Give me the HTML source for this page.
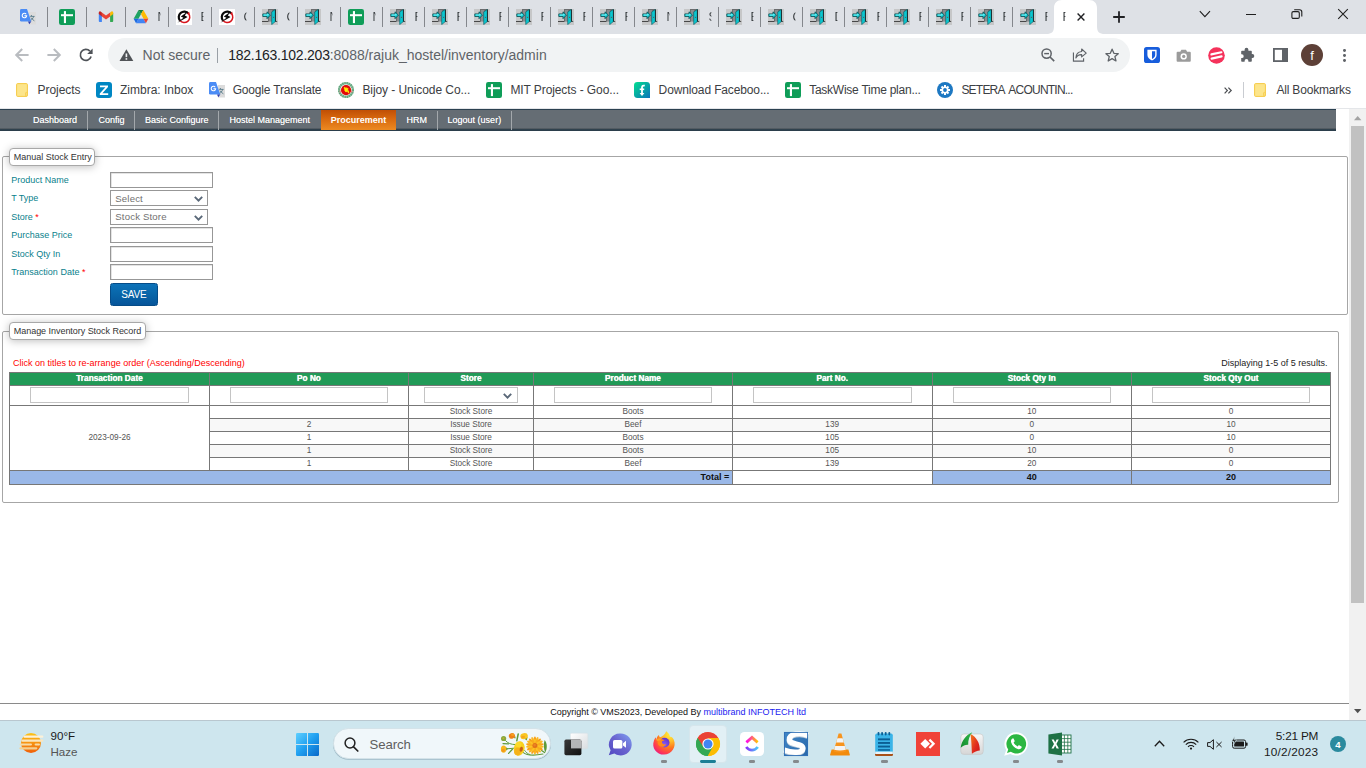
<!DOCTYPE html>
<html><head><meta charset="utf-8"><title>Inventory</title>
<style>
*{box-sizing:border-box;margin:0;padding:0}
html,body{width:1366px;height:768px;overflow:hidden;background:#fff;font-family:"Liberation Sans",sans-serif;}
.a{position:absolute}
.t{position:absolute;white-space:nowrap;display:block}
svg{position:absolute;overflow:visible}
#tabstrip{position:absolute;left:0;top:0;width:1366px;height:34px;background:#dee1e6;overflow:hidden}
#toolbar{position:absolute;left:0;top:34px;width:1366px;height:75px;background:#fff}
#page{position:absolute;left:0;top:109px;width:1349px;height:611px;background:#fff;overflow:hidden}
#sb{position:absolute;left:1349px;top:109px;width:17px;height:611px;background:#f1f1f1}
#taskbar{position:absolute;left:0;top:720px;width:1366px;height:48px;background:#cee6ee;overflow:hidden}
</style></head><body>
<svg width="0" height="0" style="position:absolute"><defs>
<symbol id="door" viewBox="0 0 16 16">
<rect x="0" y="0" width="16" height="16" fill="#c6c7c8"/>
<rect x="6" y="0" width="8" height="12.4" fill="#6a6c6e"/>
<rect x="7" y="1" width="3.2" height="11" fill="#8a8c8e"/>
<rect x="0" y="12" width="6.4" height="0.9" fill="#3a3a3a"/>
<polygon points="13.4,11.4 15.6,12.6 13.4,12.9" fill="#222"/>
<polygon points="9.7,2.9 13.3,0.5 13.3,12.6 9.7,15.6" fill="#0cc6cf" stroke="#075a60" stroke-width="0.6"/>
<polygon points="13.3,0.5 14,0.9 14,12.3 13.3,12.6" fill="#1a1a1a"/>
<circle cx="11.6" cy="8.2" r="0.55" fill="#7a3030"/>
<polygon points="0.8,4.9 5,4.9 5,2.8 8.4,6.1 5,9.7 5,7.5 0.8,7.5" fill="#10d0d8" stroke="#06474c" stroke-width="0.8"/>
<polygon points="1.6,5.5 5.4,5.5 5.4,4.6 7,6.1 5.4,6.6 1.6,6.6" fill="#7ff3f6"/>
</symbol>
<symbol id="gplus" viewBox="0 0 16 16">
<rect x="0" y="0" width="16" height="16" rx="2.2" fill="#0f9d58"/>
<rect x="4.9" y="2.1" width="2.1" height="12" fill="#fff"/>
<rect x="2" y="5.2" width="12" height="2" fill="#fff"/>
</symbol>
<symbol id="gtr" viewBox="0 0 16 16">
<rect x="9" y="3" width="7" height="12.5" fill="#dcdcdc"/>
<path d="M11.4 6V7M10.2 7.4H14.6M13.6 7.4C13.2 9.4 11.8 10.8 10.2 11.6M11 8.6C11.8 10 13 11 14.4 11.8" fill="none" stroke="#547888" stroke-width="0.9"/>
<path d="M0 1.4Q0 0 1.4 0H7L11.3 12.6H1.4Q0 12.6 0 11.2Z" fill="#4b8cf5"/>
<polygon points="8,12.6 11.3,12.6 9.3,15.2" fill="#3040b0"/>
<path d="M6.2 5.2A2.2 2.2 0 1 0 6.6 6.8H4.4" fill="none" stroke="#fff" stroke-width="1.1"/>
</symbol>
<symbol id="gmail" viewBox="0 0 16 16">
<path d="M0.8 4V12Q0.8 12.9 1.7 12.9H3.9V6.4Z" fill="#4285f4"/>
<path d="M15.2 4V12Q15.2 12.9 14.3 12.9H12.1V6.4Z" fill="#34a853"/>
<path d="M12.1 3.4L13.4 2.5A1.15 1.15 0 0 1 15.2 3.5V5L12.1 7.6Z" fill="#fbbc04"/>
<path d="M3.9 3.4L8 6.6L12.1 3.4V7.6L8 10.6L3.9 7.6Z" fill="#ea4335"/>
<path d="M0.8 3.5A1.15 1.15 0 0 1 2.6 2.5L3.9 3.4V7.6L0.8 5Z" fill="#c5221f"/>
</symbol>
<symbol id="gdrive" viewBox="0 0 16 16">
<polygon points="0.6,9.8 5.6,0.9 8,5.1 5.5,9.8" fill="#1ea362"/>
<polygon points="5.6,0.9 10.4,0.9 8,5.1" fill="#188038"/>
<polygon points="10.4,0.9 15.3,9.8 10.5,9.8 8,5.1" fill="#ffba00"/>
<polygon points="5.5,9.8 10.5,9.8 12.9,14.3 3.1,14.3" fill="#4285f4"/>
<polygon points="0.6,9.8 5.5,9.8 3.1,14.3" fill="#1a6ae0"/>
<polygon points="10.5,9.8 15.3,9.8 12.9,14.3" fill="#ea4335"/>
</symbol>
<symbol id="nofl" viewBox="0 0 16 16">
<rect x="0" y="0" width="16" height="16" fill="#fff"/>
<path d="M12.5 4.6A5.5 5.5 0 0 0 4 11.6" fill="none" stroke="#0a0a0a" stroke-width="2.2"/>
<path d="M12.5 4.6A5.5 5.5 0 0 1 4 11.6" fill="none" stroke="#d8141c" stroke-width="1.5"/>
<polygon points="13.2,2.6 13.6,5.6 11,5" fill="#d8141c"/>
<polygon points="12,2.2 4.8,7.4 7.4,8.8 1.4,13.8 11.6,8 8.8,6.6" fill="#0a0a0a"/>
</symbol>
</defs></svg>

<div id="tabstrip">
<div class="a" style="left:47.0px;top:7px;width:1px;height:20px;background:#84878c;"></div>
<div class="a" style="left:86.0px;top:7px;width:1px;height:20px;background:#84878c;"></div>
<div class="a" style="left:125.0px;top:7px;width:1px;height:20px;background:#84878c;"></div>
<div class="a" style="left:168.0px;top:7px;width:1px;height:20px;background:#84878c;"></div>
<div class="a" style="left:211.0px;top:7px;width:1px;height:20px;background:#84878c;"></div>
<div class="a" style="left:254.0px;top:7px;width:1px;height:20px;background:#84878c;"></div>
<div class="a" style="left:297.0px;top:7px;width:1px;height:20px;background:#84878c;"></div>
<div class="a" style="left:340.0px;top:7px;width:1px;height:20px;background:#84878c;"></div>
<div class="a" style="left:382.0px;top:7px;width:1px;height:20px;background:#84878c;"></div>
<div class="a" style="left:424.0px;top:7px;width:1px;height:20px;background:#84878c;"></div>
<div class="a" style="left:466.0px;top:7px;width:1px;height:20px;background:#84878c;"></div>
<div class="a" style="left:508.0px;top:7px;width:1px;height:20px;background:#84878c;"></div>
<div class="a" style="left:550.0px;top:7px;width:1px;height:20px;background:#84878c;"></div>
<div class="a" style="left:592.0px;top:7px;width:1px;height:20px;background:#84878c;"></div>
<div class="a" style="left:634.0px;top:7px;width:1px;height:20px;background:#84878c;"></div>
<div class="a" style="left:676.0px;top:7px;width:1px;height:20px;background:#84878c;"></div>
<div class="a" style="left:718.0px;top:7px;width:1px;height:20px;background:#84878c;"></div>
<div class="a" style="left:760.0px;top:7px;width:1px;height:20px;background:#84878c;"></div>
<div class="a" style="left:802.0px;top:7px;width:1px;height:20px;background:#84878c;"></div>
<div class="a" style="left:844.0px;top:7px;width:1px;height:20px;background:#84878c;"></div>
<div class="a" style="left:886.0px;top:7px;width:1px;height:20px;background:#84878c;"></div>
<div class="a" style="left:928.0px;top:7px;width:1px;height:20px;background:#84878c;"></div>
<div class="a" style="left:970.0px;top:7px;width:1px;height:20px;background:#84878c;"></div>
<div class="a" style="left:1012.0px;top:7px;width:1px;height:20px;background:#84878c;"></div>
<svg style="left:20px;top:9px" width="16" height="16"><use href="#gtr"/></svg>
<svg style="left:59px;top:9px" width="16" height="16"><use href="#gplus"/></svg>
<svg style="left:98px;top:9px" width="16" height="16"><use href="#gmail"/></svg>
<svg style="left:133px;top:9px" width="16" height="16"><use href="#gdrive"/></svg>
<div class="a" style="left:157.5px;top:8px;width:3.3px;height:18px;overflow:hidden;-webkit-mask-image:linear-gradient(90deg,#000 55%,transparent 100%);mask-image:linear-gradient(90deg,#000 55%,transparent 100%)"><span class="t" style="left:0;top:2.64px;font-size:12px;line-height:12px;color:#3c4043">N</span></div>
<svg style="left:176px;top:9px" width="16" height="16"><use href="#nofl"/></svg>
<div class="a" style="left:200.5px;top:8px;width:3.3px;height:18px;overflow:hidden;-webkit-mask-image:linear-gradient(90deg,#000 55%,transparent 100%);mask-image:linear-gradient(90deg,#000 55%,transparent 100%)"><span class="t" style="left:0;top:2.64px;font-size:12px;line-height:12px;color:#3c4043">E</span></div>
<svg style="left:219px;top:9px" width="16" height="16"><use href="#nofl"/></svg>
<div class="a" style="left:243.5px;top:8px;width:3.3px;height:18px;overflow:hidden;-webkit-mask-image:linear-gradient(90deg,#000 55%,transparent 100%);mask-image:linear-gradient(90deg,#000 55%,transparent 100%)"><span class="t" style="left:0;top:2.64px;font-size:12px;line-height:12px;color:#3c4043">C</span></div>
<svg style="left:262px;top:9px" width="16" height="16"><use href="#door"/></svg>
<div class="a" style="left:286.5px;top:8px;width:3.3px;height:18px;overflow:hidden;-webkit-mask-image:linear-gradient(90deg,#000 55%,transparent 100%);mask-image:linear-gradient(90deg,#000 55%,transparent 100%)"><span class="t" style="left:0;top:2.64px;font-size:12px;line-height:12px;color:#3c4043">C</span></div>
<svg style="left:305px;top:9px" width="16" height="16"><use href="#door"/></svg>
<div class="a" style="left:329.5px;top:8px;width:3.3px;height:18px;overflow:hidden;-webkit-mask-image:linear-gradient(90deg,#000 55%,transparent 100%);mask-image:linear-gradient(90deg,#000 55%,transparent 100%)"><span class="t" style="left:0;top:2.64px;font-size:12px;line-height:12px;color:#3c4043">N</span></div>
<svg style="left:348px;top:9px" width="16" height="16"><use href="#gplus"/></svg>
<div class="a" style="left:372.5px;top:8px;width:3.3px;height:18px;overflow:hidden;-webkit-mask-image:linear-gradient(90deg,#000 55%,transparent 100%);mask-image:linear-gradient(90deg,#000 55%,transparent 100%)"><span class="t" style="left:0;top:2.64px;font-size:12px;line-height:12px;color:#3c4043">N</span></div>
<svg style="left:390px;top:9px" width="16" height="16"><use href="#door"/></svg>
<div class="a" style="left:414.5px;top:8px;width:3.3px;height:18px;overflow:hidden;-webkit-mask-image:linear-gradient(90deg,#000 55%,transparent 100%);mask-image:linear-gradient(90deg,#000 55%,transparent 100%)"><span class="t" style="left:0;top:2.64px;font-size:12px;line-height:12px;color:#3c4043">F</span></div>
<svg style="left:432px;top:9px" width="16" height="16"><use href="#door"/></svg>
<div class="a" style="left:456.5px;top:8px;width:3.3px;height:18px;overflow:hidden;-webkit-mask-image:linear-gradient(90deg,#000 55%,transparent 100%);mask-image:linear-gradient(90deg,#000 55%,transparent 100%)"><span class="t" style="left:0;top:2.64px;font-size:12px;line-height:12px;color:#3c4043">F</span></div>
<svg style="left:474px;top:9px" width="16" height="16"><use href="#door"/></svg>
<div class="a" style="left:498.5px;top:8px;width:3.3px;height:18px;overflow:hidden;-webkit-mask-image:linear-gradient(90deg,#000 55%,transparent 100%);mask-image:linear-gradient(90deg,#000 55%,transparent 100%)"><span class="t" style="left:0;top:2.64px;font-size:12px;line-height:12px;color:#3c4043">F</span></div>
<svg style="left:516px;top:9px" width="16" height="16"><use href="#door"/></svg>
<div class="a" style="left:540.5px;top:8px;width:3.3px;height:18px;overflow:hidden;-webkit-mask-image:linear-gradient(90deg,#000 55%,transparent 100%);mask-image:linear-gradient(90deg,#000 55%,transparent 100%)"><span class="t" style="left:0;top:2.64px;font-size:12px;line-height:12px;color:#3c4043">F</span></div>
<svg style="left:558px;top:9px" width="16" height="16"><use href="#door"/></svg>
<div class="a" style="left:582.5px;top:8px;width:3.3px;height:18px;overflow:hidden;-webkit-mask-image:linear-gradient(90deg,#000 55%,transparent 100%);mask-image:linear-gradient(90deg,#000 55%,transparent 100%)"><span class="t" style="left:0;top:2.64px;font-size:12px;line-height:12px;color:#3c4043">F</span></div>
<svg style="left:600px;top:9px" width="16" height="16"><use href="#door"/></svg>
<div class="a" style="left:624.5px;top:8px;width:3.3px;height:18px;overflow:hidden;-webkit-mask-image:linear-gradient(90deg,#000 55%,transparent 100%);mask-image:linear-gradient(90deg,#000 55%,transparent 100%)"><span class="t" style="left:0;top:2.64px;font-size:12px;line-height:12px;color:#3c4043">F</span></div>
<svg style="left:642px;top:9px" width="16" height="16"><use href="#door"/></svg>
<div class="a" style="left:666.5px;top:8px;width:3.3px;height:18px;overflow:hidden;-webkit-mask-image:linear-gradient(90deg,#000 55%,transparent 100%);mask-image:linear-gradient(90deg,#000 55%,transparent 100%)"><span class="t" style="left:0;top:2.64px;font-size:12px;line-height:12px;color:#3c4043">N</span></div>
<svg style="left:684px;top:9px" width="16" height="16"><use href="#door"/></svg>
<div class="a" style="left:708.5px;top:8px;width:3.3px;height:18px;overflow:hidden;-webkit-mask-image:linear-gradient(90deg,#000 55%,transparent 100%);mask-image:linear-gradient(90deg,#000 55%,transparent 100%)"><span class="t" style="left:0;top:2.64px;font-size:12px;line-height:12px;color:#3c4043">S</span></div>
<svg style="left:726px;top:9px" width="16" height="16"><use href="#door"/></svg>
<div class="a" style="left:750.5px;top:8px;width:3.3px;height:18px;overflow:hidden;-webkit-mask-image:linear-gradient(90deg,#000 55%,transparent 100%);mask-image:linear-gradient(90deg,#000 55%,transparent 100%)"><span class="t" style="left:0;top:2.64px;font-size:12px;line-height:12px;color:#3c4043">E</span></div>
<svg style="left:768px;top:9px" width="16" height="16"><use href="#door"/></svg>
<div class="a" style="left:792.5px;top:8px;width:3.3px;height:18px;overflow:hidden;-webkit-mask-image:linear-gradient(90deg,#000 55%,transparent 100%);mask-image:linear-gradient(90deg,#000 55%,transparent 100%)"><span class="t" style="left:0;top:2.64px;font-size:12px;line-height:12px;color:#3c4043">C</span></div>
<svg style="left:810px;top:9px" width="16" height="16"><use href="#door"/></svg>
<div class="a" style="left:834.5px;top:8px;width:3.3px;height:18px;overflow:hidden;-webkit-mask-image:linear-gradient(90deg,#000 55%,transparent 100%);mask-image:linear-gradient(90deg,#000 55%,transparent 100%)"><span class="t" style="left:0;top:2.64px;font-size:12px;line-height:12px;color:#3c4043">D</span></div>
<svg style="left:852px;top:9px" width="16" height="16"><use href="#door"/></svg>
<div class="a" style="left:876.5px;top:8px;width:3.3px;height:18px;overflow:hidden;-webkit-mask-image:linear-gradient(90deg,#000 55%,transparent 100%);mask-image:linear-gradient(90deg,#000 55%,transparent 100%)"><span class="t" style="left:0;top:2.64px;font-size:12px;line-height:12px;color:#3c4043">F</span></div>
<svg style="left:894px;top:9px" width="16" height="16"><use href="#door"/></svg>
<div class="a" style="left:918.5px;top:8px;width:3.3px;height:18px;overflow:hidden;-webkit-mask-image:linear-gradient(90deg,#000 55%,transparent 100%);mask-image:linear-gradient(90deg,#000 55%,transparent 100%)"><span class="t" style="left:0;top:2.64px;font-size:12px;line-height:12px;color:#3c4043">F</span></div>
<svg style="left:936px;top:9px" width="16" height="16"><use href="#door"/></svg>
<div class="a" style="left:960.5px;top:8px;width:3.3px;height:18px;overflow:hidden;-webkit-mask-image:linear-gradient(90deg,#000 55%,transparent 100%);mask-image:linear-gradient(90deg,#000 55%,transparent 100%)"><span class="t" style="left:0;top:2.64px;font-size:12px;line-height:12px;color:#3c4043">F</span></div>
<svg style="left:978px;top:9px" width="16" height="16"><use href="#door"/></svg>
<div class="a" style="left:1002.5px;top:8px;width:3.3px;height:18px;overflow:hidden;-webkit-mask-image:linear-gradient(90deg,#000 55%,transparent 100%);mask-image:linear-gradient(90deg,#000 55%,transparent 100%)"><span class="t" style="left:0;top:2.64px;font-size:12px;line-height:12px;color:#3c4043">F</span></div>
<svg style="left:1020px;top:9px" width="16" height="16"><use href="#door"/></svg>
<div class="a" style="left:1044.5px;top:8px;width:3.3px;height:18px;overflow:hidden;-webkit-mask-image:linear-gradient(90deg,#000 55%,transparent 100%);mask-image:linear-gradient(90deg,#000 55%,transparent 100%)"><span class="t" style="left:0;top:2.64px;font-size:12px;line-height:12px;color:#3c4043">F</span></div>
<svg style="left:1046px;top:0" width="60" height="34" viewBox="0 0 60 34"><path d="M0 34C6 34 8 32 8 26V8C8 3 11 0 16 0H43C48 0 51 3 51 8V26C51 32 53 34 59 34Z" fill="#fff"/></svg>
<div class="a" style="left:1062.5px;top:8px;width:3.3px;height:18px;overflow:hidden;-webkit-mask-image:linear-gradient(90deg,#000 55%,transparent 100%);mask-image:linear-gradient(90deg,#000 55%,transparent 100%)"><span class="t" style="left:0;top:2.64px;font-size:12px;line-height:12px;color:#3c4043">F</span></div>
<svg style="left:1077px;top:13px" width="8" height="8" viewBox="0 0 8 8"><path d="M0.6 0.6L7.4 7.4M7.4 0.6L0.6 7.4" stroke="#202124" stroke-width="1.4" fill="none"/></svg>
<svg style="left:1113px;top:11px" width="12" height="12" viewBox="0 0 12 12"><path d="M6 0.2V11.8M0.2 6H11.8" stroke="#202124" stroke-width="1.8" fill="none"/></svg>
<svg style="left:1199px;top:10px" width="12" height="8" viewBox="0 0 12 8"><path d="M0.8 1.2L5.9 6.6L11 1.2" stroke="#1f1f1f" stroke-width="1.1" fill="none"/></svg>
<div class="a" style="left:1246px;top:13.5px;width:10px;height:1.1px;background:#1f1f1f;"></div>
<svg style="left:1291px;top:9px" width="12" height="10" viewBox="0 0 12 10"><rect x="0.9" y="2.6" width="7.4" height="6.8" rx="1.4" fill="none" stroke="#1f1f1f" stroke-width="1.1"/><path d="M3.2 0.7H8.6Q10.8 0.7 10.8 2.9V7.6" fill="none" stroke="#1f1f1f" stroke-width="1.1"/></svg>
<svg style="left:1338px;top:9px" width="10" height="10" viewBox="0 0 10 10"><path d="M0.2 0.2L9.8 9.8M9.8 0.2L0.2 9.8" stroke="#1f1f1f" stroke-width="1.1" fill="none"/></svg>
</div>
<div id="toolbar">
<svg style="left:15px;top:14px" width="14" height="14" viewBox="0 0 14 14"><path d="M13.6 7H1.8M7.2 1L1.2 7L7.2 13" stroke="#b9bcc0" stroke-width="2" fill="none"/></svg>
<svg style="left:47px;top:14px" width="14" height="14" viewBox="0 0 14 14"><path d="M0.4 7H12.2M6.8 1L12.8 7L6.8 13" stroke="#b9bcc0" stroke-width="2" fill="none"/></svg>
<svg style="left:79px;top:14px" width="14" height="14" viewBox="0 0 14 14"><path d="M12.1 8.6A5.5 5.5 0 1 1 10.9 3.2" stroke="#4f5358" stroke-width="1.7" fill="none"/><polygon points="13.6,0.6 13.6,6 8.2,6" fill="#4f5358"/></svg>
<div class="a" style="left:108px;top:4px;width:1022px;height:34px;border-radius:17px;background:#f1f3f4"></div>
<svg style="left:118.6px;top:14.799999999999997px" width="14.8" height="12.2" viewBox="0 0 14 12"><path d="M7 0.2L13.8 11.8H0.2Z" fill="#505357"/><rect x="6.2" y="4.4" width="1.6" height="3.6" fill="#f1f3f4"/><rect x="6.2" y="9" width="1.6" height="1.6" fill="#f1f3f4"/></svg>
<span class="t" style="left:142.6px;top:14.45px;font-size:14px;line-height:14px;color:#5f6368;">Not secure</span>
<div class="a" style="left:217px;top:13.5px;width:1px;height:15px;background:#9aa0a6;"></div>
<span class="t" style="left:228.2px;top:14.45px;font-size:14px;line-height:14px;color:#5f6368;letter-spacing:-0.005px;"><span style="color:#202124;letter-spacing:-0.24px">182.163.102.203</span>:8088/rajuk_hostel/inventory/admin</span>
<svg style="left:1041px;top:14px" width="14" height="14" viewBox="0 0 14 14"><circle cx="5.6" cy="5.6" r="4.6" fill="none" stroke="#5f6368" stroke-width="1.5"/><path d="M9 9L13.2 13.2" stroke="#5f6368" stroke-width="1.7"/><path d="M3.2 5.6H8" stroke="#5f6368" stroke-width="1.4"/></svg>
<svg style="left:1072.3px;top:14.299999999999997px" width="16" height="14" viewBox="0 0 17 16"><path d="M1 5.2V15H12.6V11.6" fill="none" stroke="#5f6368" stroke-width="1.3"/><path d="M10.4 1.2L15.6 5.8L10.4 10.2V7.6C7.2 7.4 5.2 8.6 3.8 11.4C4 7.4 6.2 4.4 10.4 4Z" fill="none" stroke="#5f6368" stroke-width="1.3" stroke-linejoin="round"/></svg>
<svg style="left:1105px;top:13.799999999999997px" width="14.2" height="14.2" viewBox="0 0 15 15"><path d="M7.5 1.3L9.4 5.6L14 6L10.5 9.1L11.6 13.7L7.5 11.2L3.4 13.7L4.5 9.1L1 6L5.6 5.6Z" fill="none" stroke="#5f6368" stroke-width="1.4" stroke-linejoin="round"/></svg>
<svg style="left:1144px;top:13px" width="16" height="16" viewBox="0 0 16 16"><rect width="16" height="16" rx="2.6" fill="#175ddc"/><path d="M3.4 2.8H12.6V8C12.6 10.6 10.6 12.4 8 13.6C5.4 12.4 3.4 10.6 3.4 8Z" fill="#fff"/><path d="M8 4.2H11.2V8C11.2 9.8 9.8 11 8 12Z" fill="#175ddc"/></svg>
<svg style="left:1176.4px;top:14.600000000000001px" width="15.4" height="13.4" viewBox="0 0 16 14"><path d="M1.6 2.8H4.4L5.6 0.8H10.4L11.6 2.8H14.4Q15.4 2.8 15.4 3.8V12.2Q15.4 13.2 14.4 13.2H1.6Q0.6 13.2 0.6 12.2V3.8Q0.6 2.8 1.6 2.8Z" fill="#9b9b9b"/><circle cx="8" cy="7.8" r="3.3" fill="#fff"/><circle cx="8" cy="7.8" r="1.7" fill="#9b9b9b"/></svg>
<svg style="left:1208px;top:12.600000000000001px" width="17" height="17" viewBox="0 0 17 17"><circle cx="8.5" cy="8.5" r="8.3" fill="#f5325b"/><path d="M3.4 7.4L13.4 5.2" stroke="#fff" stroke-width="2.1" stroke-linecap="round"/><path d="M3.6 11.6L13.6 9.4" stroke="#fff" stroke-width="2.1" stroke-linecap="round"/></svg>
<svg style="left:1240px;top:13px" width="16" height="16" viewBox="0 0 16 16"><path d="M6.2 2.4a1.9 1.9 0 0 1 3.8 0V3.4H12.6Q13.4 3.4 13.4 4.2V6.8H14a1.9 1.9 0 0 1 0 3.8H13.4V13.6Q13.4 14.4 12.6 14.4H10V13.6a1.9 1.9 0 0 0-3.8 0V14.4H3.6Q2.8 14.4 2.8 13.6V10.8H3.4a1.9 1.9 0 0 0 0-3.8H2.8V4.2Q2.8 3.4 3.6 3.4H6.2Z" fill="#5f6368" transform="translate(-1.6,0.3)"/></svg>
<svg style="left:1273px;top:14px" width="15" height="14" viewBox="0 0 15 14"><rect x="0.9" y="0.9" width="13.2" height="12.2" fill="none" stroke="#5f6368" stroke-width="1.8"/><rect x="9" y="0.9" width="5.1" height="12.2" fill="#5f6368"/></svg>
<div class="a" style="left:1301px;top:10px;width:22px;height:22px;border-radius:11px;background:#5d4037"></div>
<span class="t" style="left:812px;width:1000px;text-align:center;top:14.70px;font-size:13px;line-height:13px;color:#fff;">f</span>
<div class="a" style="left:1343.4px;top:15.4px;width:2.8px;height:2.8px;border-radius:50%;background:#5f6368"></div>
<div class="a" style="left:1343.4px;top:20.1px;width:2.8px;height:2.8px;border-radius:50%;background:#5f6368"></div>
<div class="a" style="left:1343.4px;top:24.8px;width:2.8px;height:2.8px;border-radius:50%;background:#5f6368"></div>
<svg style="left:16px;top:49px" width="12" height="14" viewBox="0 0 12 14"><path d="M0.6 1.6Q0.6 0.6 1.6 0.6H10.4Q11.4 0.6 11.4 1.6V12.4Q11.4 13.4 10.4 13.4H1.6Q0.6 13.4 0.6 12.4Z" fill="#fce58b" stroke="#f6ca45" stroke-width="1"/><rect x="9.6" y="9.4" width="1.6" height="3.6" rx="0.6" fill="#fce58b" stroke="#f6ca45" stroke-width="0.8"/></svg>
<span class="t" style="left:37.6px;top:50.14px;font-size:12px;line-height:12px;color:#3c4043;letter-spacing:-0.06px;">Projects</span>
<svg style="left:96px;top:48px" width="16" height="16" viewBox="0 0 16 16"><rect width="16" height="16" rx="3" fill="#0087c3"/><path d="M4 3.4H12V5L6.4 11.2H12.2V13H3.8V11.4L9.4 5.2H4Z" fill="#fff"/></svg>
<span class="t" style="left:120px;top:50.14px;font-size:12px;line-height:12px;color:#3c4043;">Zimbra: Inbox</span>
<svg style="left:209px;top:48px" width="16" height="16"><use href="#gtr"/></svg>
<span class="t" style="left:232.7px;top:50.14px;font-size:12px;line-height:12px;color:#3c4043;letter-spacing:-0.17px;">Google Translate</span>
<svg style="left:338px;top:48px" width="16" height="16" viewBox="0 0 16 16"><circle cx="8" cy="8" r="6.9" fill="#fff" stroke="#8fc0a2" stroke-width="2.2"/><circle cx="8" cy="8" r="6.9" fill="none" stroke="#5fa57c" stroke-width="2.2" stroke-dasharray="1.1 1.1"/><path d="M1.6 9.6L3.4 9.2M12.6 9.2L14.4 9.6" stroke="#f08a8a" stroke-width="1.6"/><circle cx="8.05" cy="8.05" r="5.1" fill="#e00a0a"/><path d="M6 4.8L7.2 5.6L8.6 5.4L10.6 6.6L10 8L11 9L11.2 11L10.2 11.2L9.4 9.8L8 10.2L7 9.6L6.6 7.6L5.8 6.4Z" fill="#fbd508"/><circle cx="7.8" cy="8" r="1.4" fill="#fff200"/></svg>
<span class="t" style="left:362.4px;top:50.14px;font-size:12px;line-height:12px;color:#3c4043;letter-spacing:-0.07px;">Bijoy - Unicode Co...</span>
<svg style="left:486px;top:48px" width="16" height="16"><use href="#gplus"/></svg>
<span class="t" style="left:510.4px;top:50.14px;font-size:12px;line-height:12px;color:#3c4043;letter-spacing:-0.09px;">MIT Projects - Goo...</span>
<svg style="left:634px;top:48px" width="16" height="16" viewBox="0 0 16 16"><defs><linearGradient id="fg" x1="0" y1="0" x2="1" y2="1"><stop offset="0" stop-color="#00e090"/><stop offset="0.5" stop-color="#07a8a4"/><stop offset="1" stop-color="#0a74bc"/></linearGradient></defs><path d="M3.4 0H12.6Q16 0 16 3.4V16H3.4Q0 16 0 12.6V3.4Q0 0 3.4 0Z" fill="url(#fg)"/><path d="M8 11.6V5.4Q8 3.2 10.8 3.7" fill="none" stroke="#fff" stroke-width="1.8"/><rect x="5.7" y="6.5" width="4.5" height="1.6" fill="#fff"/><polygon points="5.6,11 10.4,11 8,14" fill="#fff"/></svg>
<span class="t" style="left:658.6px;top:50.14px;font-size:12px;line-height:12px;color:#3c4043;letter-spacing:-0.13px;">Download Faceboo...</span>
<svg style="left:785px;top:48px" width="16" height="16"><use href="#gplus"/></svg>
<span class="t" style="left:809.2px;top:50.14px;font-size:12px;line-height:12px;color:#3c4043;letter-spacing:-0.25px;">TaskWise Time plan...</span>
<svg style="left:937px;top:48px" width="16" height="16" viewBox="0 0 16 16"><circle cx="8" cy="8" r="8" fill="#1d78c2"/><g stroke="#fff" stroke-width="2" stroke-linecap="butt"><path d="M8 3V13M3 8H13M4.5 4.5L11.5 11.5M11.5 4.5L4.5 11.5"/></g><circle cx="8" cy="8" r="3.5" fill="#fff"/><circle cx="8" cy="8" r="1.9" fill="#1d78c2"/></svg>
<span class="t" style="left:961.4px;top:50.14px;font-size:12px;line-height:12px;color:#3c4043;letter-spacing:-0.78px;word-spacing:2.4px;">SETERA ACOUNTIN...</span>
<svg style="left:1224px;top:52.5px" width="8" height="7" viewBox="0 0 8 7"><path d="M0.6 0.6L3.4 3.5L0.6 6.4M4.4 0.6L7.2 3.5L4.4 6.4" stroke="#4a4d51" stroke-width="1.2" fill="none"/></svg>
<div class="a" style="left:1242.5px;top:48px;width:1px;height:16px;background:#c9ccd1;"></div>
<svg style="left:1254px;top:49px" width="12" height="14" viewBox="0 0 12 14"><path d="M0.6 1.6Q0.6 0.6 1.6 0.6H10.4Q11.4 0.6 11.4 1.6V12.4Q11.4 13.4 10.4 13.4H1.6Q0.6 13.4 0.6 12.4Z" fill="#fce58b" stroke="#f6ca45" stroke-width="1"/><rect x="9.6" y="9.4" width="1.6" height="3.6" rx="0.6" fill="#fce58b" stroke="#f6ca45" stroke-width="0.8"/></svg>
<span class="t" style="left:1276.4px;top:50.14px;font-size:12px;line-height:12px;color:#3c4043;letter-spacing:-0.18px;">All Bookmarks</span>
<div class="a" style="left:0px;top:74px;width:1366px;height:1px;background:#e4e6e9;"></div>
</div>
<div id="page">
<div class="a" style="left:0;top:0;width:1336px;height:22px;background:linear-gradient(#2b4150 0,#2b4150 1px,#656d74 1px,#656d74 18.5px,#4a535a 20px,#2b3e4b 20.6px,#2b3e4b 22px)"></div>
<span class="t" style="left:-445.0px;width:1000px;text-align:center;top:6.68px;font-size:9px;line-height:9px;color:#fff;text-shadow:0 0 0.6px rgba(255,255,255,.7);">Dashboard</span>
<span class="t" style="left:-388.5px;width:1000px;text-align:center;top:6.68px;font-size:9px;line-height:9px;color:#fff;text-shadow:0 0 0.6px rgba(255,255,255,.7);">Config</span>
<span class="t" style="left:-323.15px;width:1000px;text-align:center;top:6.68px;font-size:9px;line-height:9px;color:#fff;text-shadow:0 0 0.6px rgba(255,255,255,.7);">Basic Configure</span>
<span class="t" style="left:-230.25px;width:1000px;text-align:center;top:6.68px;font-size:9px;line-height:9px;color:#fff;text-shadow:0 0 0.6px rgba(255,255,255,.7);">Hostel Management</span>
<div class="a" style="left:320.8px;top:1px;width:75.39999999999998px;height:20px;background:linear-gradient(#c04f05,#d8690f 45%,#ec8a22)"></div>
<span class="t" style="left:-141.5px;width:1000px;text-align:center;top:6.68px;font-size:9px;line-height:9px;color:#fff;font-weight:bold;">Procurement</span>
<span class="t" style="left:-83.30000000000001px;width:1000px;text-align:center;top:6.68px;font-size:9px;line-height:9px;color:#fff;text-shadow:0 0 0.6px rgba(255,255,255,.7);">HRM</span>
<span class="t" style="left:-25.649999999999977px;width:1000px;text-align:center;top:6.68px;font-size:9px;line-height:9px;color:#fff;text-shadow:0 0 0.6px rgba(255,255,255,.7);">Logout (user)</span>
<div class="a" style="left:87.0px;top:1.5px;width:1px;height:19.5px;background:#a3a8ac;"></div>
<div class="a" style="left:134.1px;top:1.5px;width:1px;height:19.5px;background:#a3a8ac;"></div>
<div class="a" style="left:217.8px;top:1.5px;width:1px;height:19.5px;background:#a3a8ac;"></div>
<div class="a" style="left:436.7px;top:1.5px;width:1px;height:19.5px;background:#a3a8ac;"></div>
<div class="a" style="left:511.0px;top:1.5px;width:1px;height:19.5px;background:#a3a8ac;"></div>
<div class="a" style="left:2px;top:47px;width:1346px;height:159px;border:1px solid #a6a6a6;border-radius:2px"></div>
<div class="a" style="left:9px;top:39px;width:86px;height:18px;border:1px solid #a8a8a8;border-radius:4px;background:#fff;box-shadow:0 1px 8px rgba(0,0,0,.26)"></div>
<span class="t" style="left:13.8px;top:43.68px;font-size:9px;line-height:9px;color:#333;">Manual Stock Entry</span>
<span class="t" style="left:11.2px;top:66.68px;font-size:9px;line-height:9px;color:#0a7f8c;">Product Name</span>
<span class="t" style="left:11.2px;top:84.68px;font-size:9px;line-height:9px;color:#0a7f8c;">T Type</span>
<span class="t" style="left:11.2px;top:103.68px;font-size:9px;line-height:9px;color:#0a7f8c;">Store <span style="color:#f00">*</span></span>
<span class="t" style="left:11.2px;top:121.68px;font-size:9px;line-height:9px;color:#0a7f8c;">Purchase Price</span>
<span class="t" style="left:11.2px;top:140.68px;font-size:9px;line-height:9px;color:#0a7f8c;">Stock Qty In</span>
<span class="t" style="left:11.2px;top:158.68px;font-size:9px;line-height:9px;color:#0a7f8c;">Transaction Date <span style="color:#f00">*</span></span>
<div class="a" style="left:110px;top:63.19999999999999px;width:103px;height:15.400000000000006px;border:1px solid #979797;background:#fff;box-shadow:inset 0.5px 0.5px 0 #c9c9c9"></div>
<div class="a" style="left:110px;top:118.19999999999999px;width:103px;height:15.5px;border:1px solid #979797;background:#fff;box-shadow:inset 0.5px 0.5px 0 #c9c9c9"></div>
<div class="a" style="left:110px;top:137.1px;width:103px;height:15.599999999999994px;border:1px solid #979797;background:#fff;box-shadow:inset 0.5px 0.5px 0 #c9c9c9"></div>
<div class="a" style="left:110px;top:155.2px;width:103px;height:15.5px;border:1px solid #979797;background:#fff;box-shadow:inset 0.5px 0.5px 0 #c9c9c9"></div>
<div class="a" style="left:110px;top:81.19999999999999px;width:98px;height:15.600000000000023px;border:1px solid #979797;background:#fff"></div><span class="t" style="left:115.3px;top:85.17px;font-size:9.6px;line-height:9.6px;color:#707070;letter-spacing:0.16px;">Select</span><svg style="left:193.9px;top:86.80000000000001px" width="9" height="6" viewBox="0 0 9 6"><path d="M0.8 0.9L4.5 4.6L8.2 0.9" stroke="#5a6878" stroke-width="1.9" fill="none"/></svg>
<div class="a" style="left:110px;top:100px;width:98px;height:15.599999999999994px;border:1px solid #979797;background:#fff"></div><span class="t" style="left:115.3px;top:103.17px;font-size:9.6px;line-height:9.6px;color:#707070;letter-spacing:0.16px;">Stock Store</span><svg style="left:193.9px;top:105.60000000000002px" width="9" height="6" viewBox="0 0 9 6"><path d="M0.8 0.9L4.5 4.6L8.2 0.9" stroke="#5a6878" stroke-width="1.9" fill="none"/></svg>
<div class="a" style="left:110px;top:174px;width:48px;height:23px;border-radius:2.5px;background:linear-gradient(#0d72b8,#0865a8 50%,#06559a);border:1px solid #054c88"></div>
<span class="t" style="left:-366.2px;width:1000px;text-align:center;top:180.84px;font-size:10px;line-height:10px;color:#fff;letter-spacing:-0.2px;">SAVE</span>
<div class="a" style="left:2px;top:222px;width:1336.6px;height:171.5px;border:1px solid #a6a6a6;border-radius:2px"></div>
<div class="a" style="left:9px;top:213.39999999999998px;width:137px;height:17.8px;border:1px solid #a8a8a8;border-radius:4px;background:#fff;box-shadow:0 1px 8px rgba(0,0,0,.26)"></div>
<span class="t" style="left:13.8px;top:217.68px;font-size:9px;line-height:9px;color:#333;letter-spacing:-0.04px;">Manage Inventory Stock Record</span>
<span class="t" style="left:13.1px;top:249.68px;font-size:9px;line-height:9px;color:#f00;">Click on titles to re-arrange order (Ascending/Descending)</span>
<span class="t" style="left:327.4000000000001px;width:1000px;text-align:right;top:249.68px;font-size:9px;line-height:9px;color:#222;">Displaying 1-5 of 5 results.</span>
<div class="a" style="left:9.5px;top:263.3px;width:1321.1px;height:13.099999999999966px;background:#219a57;"></div>
<span class="t" style="left:-390.5px;width:1000px;text-align:center;top:265.52px;font-size:8.25px;line-height:8.25px;color:#fff;font-weight:bold;text-shadow:0 0 0.7px #fff;">Transaction Date</span>
<span class="t" style="left:-191.0px;width:1000px;text-align:center;top:265.52px;font-size:8.25px;line-height:8.25px;color:#fff;font-weight:bold;text-shadow:0 0 0.7px #fff;">Po No</span>
<span class="t" style="left:-29.0px;width:1000px;text-align:center;top:265.52px;font-size:8.25px;line-height:8.25px;color:#fff;font-weight:bold;text-shadow:0 0 0.7px #fff;">Store</span>
<span class="t" style="left:133.0px;width:1000px;text-align:center;top:265.52px;font-size:8.25px;line-height:8.25px;color:#fff;font-weight:bold;text-shadow:0 0 0.7px #fff;">Product Name</span>
<span class="t" style="left:332.25px;width:1000px;text-align:center;top:265.52px;font-size:8.25px;line-height:8.25px;color:#fff;font-weight:bold;text-shadow:0 0 0.7px #fff;">Part No.</span>
<span class="t" style="left:531.75px;width:1000px;text-align:center;top:265.52px;font-size:8.25px;line-height:8.25px;color:#fff;font-weight:bold;text-shadow:0 0 0.7px #fff;">Stock Qty In</span>
<span class="t" style="left:731.05px;width:1000px;text-align:center;top:265.52px;font-size:8.25px;line-height:8.25px;color:#fff;font-weight:bold;text-shadow:0 0 0.7px #fff;">Stock Qty Out</span>
<div class="a" style="left:209.5px;top:309.6px;width:1121.1px;height:13.0px;background:#f8f8f8;"></div>
<div class="a" style="left:209.5px;top:335.6px;width:1121.1px;height:13.0px;background:#f8f8f8;"></div>
<div class="a" style="left:9.5px;top:361.4px;width:723.0px;height:14.0px;background:#9ab8e8;"></div>
<div class="a" style="left:932px;top:361.4px;width:398.5999999999999px;height:14.0px;background:#9ab8e8;"></div>
<div class="a" style="left:9.0px;top:262.8px;width:1322.1px;height:1px;background:#777;"></div>
<div class="a" style="left:9.0px;top:275.9px;width:1322.1px;height:1px;background:#777;"></div>
<div class="a" style="left:9.0px;top:296.0px;width:1322.1px;height:1px;background:#777;"></div>
<div class="a" style="left:209.0px;top:309.1px;width:1122.1px;height:1px;background:#777;"></div>
<div class="a" style="left:209.0px;top:322.1px;width:1122.1px;height:1px;background:#777;"></div>
<div class="a" style="left:209.0px;top:335.1px;width:1122.1px;height:1px;background:#777;"></div>
<div class="a" style="left:209.0px;top:348.1px;width:1122.1px;height:1px;background:#777;"></div>
<div class="a" style="left:9.0px;top:360.9px;width:1322.1px;height:1px;background:#777;"></div>
<div class="a" style="left:9.0px;top:374.9px;width:1322.1px;height:1px;background:#777;"></div>
<div class="a" style="left:9.0px;top:262.8px;width:1px;height:113.09999999999997px;background:#777;"></div>
<div class="a" style="left:1330.1px;top:262.8px;width:1px;height:113.09999999999997px;background:#777;"></div>
<div class="a" style="left:209.0px;top:262.8px;width:1px;height:99.09999999999997px;background:#777;"></div>
<div class="a" style="left:408.0px;top:262.8px;width:1px;height:99.09999999999997px;background:#777;"></div>
<div class="a" style="left:533.0px;top:262.8px;width:1px;height:99.09999999999997px;background:#777;"></div>
<div class="a" style="left:732.0px;top:262.8px;width:1px;height:113.09999999999997px;background:#777;"></div>
<div class="a" style="left:931.5px;top:262.8px;width:1px;height:113.09999999999997px;background:#777;"></div>
<div class="a" style="left:1131.0px;top:262.8px;width:1px;height:113.09999999999997px;background:#777;"></div>
<div class="a" style="left:30.2px;top:278.4px;width:158.9px;height:15.3px;border:1px solid #c4c4c4;background:#fff"></div>
<div class="a" style="left:230.2px;top:278.4px;width:157.90000000000003px;height:15.3px;border:1px solid #c4c4c4;background:#fff"></div>
<div class="a" style="left:424px;top:278.4px;width:93.6px;height:15.3px;border:1px solid #c4c4c4;background:#fff"></div>
<svg style="left:503.4px;top:283.6px" width="9" height="6" viewBox="0 0 9 6"><path d="M0.8 0.9L4.5 4.6L8.2 0.9" stroke="#5a6878" stroke-width="1.9" fill="none"/></svg>
<div class="a" style="left:554.2px;top:278.4px;width:157.89999999999998px;height:15.3px;border:1px solid #c4c4c4;background:#fff"></div>
<div class="a" style="left:753.2px;top:278.4px;width:158.39999999999998px;height:15.3px;border:1px solid #c4c4c4;background:#fff"></div>
<div class="a" style="left:952.7px;top:278.4px;width:158.39999999999986px;height:15.3px;border:1px solid #c4c4c4;background:#fff"></div>
<div class="a" style="left:1152.2px;top:278.4px;width:157.99999999999977px;height:15.3px;border:1px solid #c4c4c4;background:#fff"></div>
<span class="t" style="left:-29.0px;width:1000px;text-align:center;top:298.72px;font-size:8.25px;line-height:8.25px;color:#555;">Stock Store</span>
<span class="t" style="left:133.0px;width:1000px;text-align:center;top:298.72px;font-size:8.25px;line-height:8.25px;color:#555;">Boots</span>
<span class="t" style="left:531.75px;width:1000px;text-align:center;top:298.72px;font-size:8.25px;line-height:8.25px;color:#555;">10</span>
<span class="t" style="left:731.05px;width:1000px;text-align:center;top:298.72px;font-size:8.25px;line-height:8.25px;color:#555;">0</span>
<span class="t" style="left:-191.0px;width:1000px;text-align:center;top:311.82px;font-size:8.25px;line-height:8.25px;color:#555;">2</span>
<span class="t" style="left:-29.0px;width:1000px;text-align:center;top:311.82px;font-size:8.25px;line-height:8.25px;color:#555;">Issue Store</span>
<span class="t" style="left:133.0px;width:1000px;text-align:center;top:311.82px;font-size:8.25px;line-height:8.25px;color:#555;">Beef</span>
<span class="t" style="left:332.25px;width:1000px;text-align:center;top:311.82px;font-size:8.25px;line-height:8.25px;color:#555;">139</span>
<span class="t" style="left:531.75px;width:1000px;text-align:center;top:311.82px;font-size:8.25px;line-height:8.25px;color:#555;">0</span>
<span class="t" style="left:731.05px;width:1000px;text-align:center;top:311.82px;font-size:8.25px;line-height:8.25px;color:#555;">10</span>
<span class="t" style="left:-191.0px;width:1000px;text-align:center;top:324.82px;font-size:8.25px;line-height:8.25px;color:#555;">1</span>
<span class="t" style="left:-29.0px;width:1000px;text-align:center;top:324.82px;font-size:8.25px;line-height:8.25px;color:#555;">Issue Store</span>
<span class="t" style="left:133.0px;width:1000px;text-align:center;top:324.82px;font-size:8.25px;line-height:8.25px;color:#555;">Boots</span>
<span class="t" style="left:332.25px;width:1000px;text-align:center;top:324.82px;font-size:8.25px;line-height:8.25px;color:#555;">105</span>
<span class="t" style="left:531.75px;width:1000px;text-align:center;top:324.82px;font-size:8.25px;line-height:8.25px;color:#555;">0</span>
<span class="t" style="left:731.05px;width:1000px;text-align:center;top:324.82px;font-size:8.25px;line-height:8.25px;color:#555;">10</span>
<span class="t" style="left:-191.0px;width:1000px;text-align:center;top:337.82px;font-size:8.25px;line-height:8.25px;color:#555;">1</span>
<span class="t" style="left:-29.0px;width:1000px;text-align:center;top:337.82px;font-size:8.25px;line-height:8.25px;color:#555;">Stock Store</span>
<span class="t" style="left:133.0px;width:1000px;text-align:center;top:337.82px;font-size:8.25px;line-height:8.25px;color:#555;">Boots</span>
<span class="t" style="left:332.25px;width:1000px;text-align:center;top:337.82px;font-size:8.25px;line-height:8.25px;color:#555;">105</span>
<span class="t" style="left:531.75px;width:1000px;text-align:center;top:337.82px;font-size:8.25px;line-height:8.25px;color:#555;">10</span>
<span class="t" style="left:731.05px;width:1000px;text-align:center;top:337.82px;font-size:8.25px;line-height:8.25px;color:#555;">0</span>
<span class="t" style="left:-191.0px;width:1000px;text-align:center;top:350.82px;font-size:8.25px;line-height:8.25px;color:#555;">1</span>
<span class="t" style="left:-29.0px;width:1000px;text-align:center;top:350.82px;font-size:8.25px;line-height:8.25px;color:#555;">Stock Store</span>
<span class="t" style="left:133.0px;width:1000px;text-align:center;top:350.82px;font-size:8.25px;line-height:8.25px;color:#555;">Beef</span>
<span class="t" style="left:332.25px;width:1000px;text-align:center;top:350.82px;font-size:8.25px;line-height:8.25px;color:#555;">139</span>
<span class="t" style="left:531.75px;width:1000px;text-align:center;top:350.82px;font-size:8.25px;line-height:8.25px;color:#555;">20</span>
<span class="t" style="left:731.05px;width:1000px;text-align:center;top:350.82px;font-size:8.25px;line-height:8.25px;color:#555;">0</span>
<span class="t" style="left:-390.5px;width:1000px;text-align:center;top:324.72px;font-size:8.25px;line-height:8.25px;color:#555;">2023-09-26</span>
<span class="t" style="left:-270.79999999999995px;width:1000px;text-align:right;top:363.68px;font-size:9px;line-height:9px;color:#111;font-weight:bold;">Total =</span>
<span class="t" style="left:531.75px;width:1000px;text-align:center;top:363.68px;font-size:9px;line-height:9px;color:#111;font-weight:bold;">40</span>
<span class="t" style="left:731.05px;width:1000px;text-align:center;top:363.68px;font-size:9px;line-height:9px;color:#111;font-weight:bold;">20</span>
<div class="a" style="left:0px;top:594px;width:1349px;height:1px;background:#8a8a8a;"></div>
<span class="t" style="left:550.2px;top:598.68px;font-size:9px;line-height:9px;color:#111;">Copyright © VMS2023, Developed By <span style="color:#1a1af0">multibrand INFOTECH ltd</span></span>
</div>
<div id="sb">
<svg style="left:4.8px;top:7px" width="7.4" height="4.2" viewBox="0 0 9 5"><polygon points="4.5,0 9,5 0,5" fill="#a3a3a3"/></svg>
<div class="a" style="left:2px;top:17px;width:13px;height:477px;background:#c1c1c1;"></div>
<svg style="left:4.7px;top:600px" width="7.4" height="4.2" viewBox="0 0 9 5"><polygon points="0,0 9,0 4.5,5" fill="#505050"/></svg>
</div>
<div id="taskbar">
<div class="a" style="left:0px;top:0px;width:1366px;height:1px;background:#b9c7cf;"></div>
<svg style="left:18px;top:12px" width="27" height="22" viewBox="0 0 27 22">
<defs><linearGradient id="hz" x1="0" y1="0" x2="0" y2="1"><stop offset="0" stop-color="#fcc419"/><stop offset="1" stop-color="#f0600a"/></linearGradient></defs>
<circle cx="13" cy="11" r="10" fill="url(#hz)"/>
<rect x="5.4" y="3.6" width="20" height="2.2" rx="1.1" fill="#fdf1d8"/>
<rect x="3.4" y="7.6" width="22" height="2.2" rx="1.1" fill="#fbe6bd"/>
<rect x="1.6" y="11.4" width="12.4" height="2.2" rx="1.1" fill="#f8dba6"/>
<rect x="16.6" y="11.4" width="5.4" height="2.2" rx="1.1" fill="#f8dba6"/>
<rect x="1.4" y="15.2" width="18" height="2.2" rx="1.1" fill="#f5d08f"/>
</svg>
<span class="t" style="left:50.5px;top:10.28px;font-size:11.6px;line-height:11.6px;color:#1a1a1a;">90°F</span>
<span class="t" style="left:50.5px;top:26.38px;font-size:11.6px;line-height:11.6px;color:#555;">Haze</span>
<svg style="left:296px;top:13px" width="23" height="23" viewBox="0 0 23 23">
<defs><linearGradient id="wl" gradientUnits="userSpaceOnUse" x1="0" y1="0" x2="23" y2="23"><stop offset="0" stop-color="#5fd0ff"/><stop offset="0.5" stop-color="#1f9ff0"/><stop offset="1" stop-color="#0968c8"/></linearGradient></defs>
<g fill="url(#wl)"><path d="M1.2 0H11V11H0V1.2Q0 0 1.2 0Z"/><path d="M12 0H21.8Q23 0 23 1.2V11H12Z"/><path d="M0 12H11V23H1.2Q0 23 0 21.8Z"/><path d="M12 12H23V21.8Q23 23 21.8 23H12Z"/></g></svg>
<div class="a" style="left:333px;top:8.399999999999977px;width:218px;height:30.5px;border-radius:15.25px;background:#f0f7fa;border:1px solid #d4e3e9;box-shadow:0 0.8px 0.6px rgba(120,150,165,.55)"></div>
<svg style="left:344px;top:16.600000000000023px" width="15" height="15" viewBox="0 0 15 15"><circle cx="6" cy="6" r="4.9" fill="none" stroke="#222" stroke-width="1.5"/><path d="M9.6 9.8L13.8 14" stroke="#222" stroke-width="1.7" stroke-linecap="round"/></svg>
<span class="t" style="left:369.4px;top:18.13px;font-size:13.2px;line-height:13.2px;color:#5e5e5e;letter-spacing:-0.05px;">Search</span>
<svg style="left:490px;top:4px" width="70" height="40" viewBox="0 0 70 40"><g fill="none" stroke="#5f9a3c" stroke-linecap="round"><path d="M15.5 16.6C18 19.5 21 20.4 25.4 20.6" stroke-width="1"/><path d="M13 19.6L18.6 19.8" stroke-width="1.2"/><path d="M17 24.8L24 24.2" stroke-width="1"/><path d="M18.6 29.4L22.4 25.2" stroke-width="1.3"/><path d="M28.2 10L26.8 16.8" stroke-width="1.5"/><path d="M33 28.4C37 31.6 44 31.8 53 30" stroke-width="1.1"/><path d="M34.6 26.4C36 28.6 38 30 40 30.6" stroke-width="0.9"/><path d="M51.6 26.4L54.6 28.6" stroke-width="1.3"/></g><path d="M54.6 16C57.4 19 57.4 25 55.2 28.4C53.6 25 53.4 20 54.6 16Z" fill="#5d9a3a"/><circle cx="13.6" cy="14.5" r="2.6" fill="#86a83e"/><circle cx="13.4" cy="14.2" r="1" fill="#c0b030"/><path d="M23.6 13.4L25.8 12.4L25.2 14.8Z" fill="#6a9a3a"/><ellipse cx="21.9" cy="11.9" rx="3.1" ry="2.8" fill="#ee8216" transform="rotate(-20 21.9 11.9)"/><ellipse cx="22.6" cy="10.8" rx="1.6" ry="1.2" fill="#f6a020"/><path d="M34 14.4L37.6 13L36.8 16.6Z" fill="#6a9a3a"/><ellipse cx="34.1" cy="12.1" rx="3.8" ry="3" fill="#f9c522" transform="rotate(-12 34.1 12.1)"/><ellipse cx="33" cy="13" rx="2" ry="1.2" fill="#f3a81c"/><path d="M15.6 23L18.2 24.8L15.6 27Z" fill="#6a9a3a"/><ellipse cx="13.6" cy="25.1" rx="2.7" ry="3.7" fill="#f8b71e"/><ellipse cx="13.2" cy="26.4" rx="1.8" ry="1.6" fill="#f39c18"/><ellipse cx="29.2" cy="24.5" rx="5.4" ry="7.3" fill="#f9cf1f" transform="rotate(12 29.2 24.5)"/><ellipse cx="27.6" cy="27.4" rx="3.4" ry="4" fill="#f5b21a" transform="rotate(12 27.6 27.4)"/><ellipse cx="28.4" cy="20.6" rx="3" ry="2.6" fill="#fbd92a"/><ellipse cx="31.3" cy="25.2" rx="1.6" ry="2.6" fill="#c8601a" transform="rotate(14 31.3 25.2)"/><ellipse cx="44.9" cy="16.17" rx="1.25" ry="3.61" fill="#f8a11a" transform="rotate(0.0 44.9 21.5)"/><ellipse cx="44.9" cy="16.17" rx="1.25" ry="3.61" fill="#fbb822" transform="rotate(20.0 44.9 21.5)"/><ellipse cx="44.9" cy="16.17" rx="1.25" ry="3.61" fill="#f8a11a" transform="rotate(40.0 44.9 21.5)"/><ellipse cx="44.9" cy="16.17" rx="1.25" ry="3.61" fill="#fbb822" transform="rotate(60.0 44.9 21.5)"/><ellipse cx="44.9" cy="16.17" rx="1.25" ry="3.61" fill="#f8a11a" transform="rotate(80.0 44.9 21.5)"/><ellipse cx="44.9" cy="16.17" rx="1.25" ry="3.61" fill="#fbb822" transform="rotate(100.0 44.9 21.5)"/><ellipse cx="44.9" cy="16.17" rx="1.25" ry="3.61" fill="#f8a11a" transform="rotate(120.0 44.9 21.5)"/><ellipse cx="44.9" cy="16.17" rx="1.25" ry="3.61" fill="#fbb822" transform="rotate(140.0 44.9 21.5)"/><ellipse cx="44.9" cy="16.17" rx="1.25" ry="3.61" fill="#f8a11a" transform="rotate(160.0 44.9 21.5)"/><ellipse cx="44.9" cy="16.17" rx="1.25" ry="3.61" fill="#fbb822" transform="rotate(180.0 44.9 21.5)"/><ellipse cx="44.9" cy="16.17" rx="1.25" ry="3.61" fill="#f8a11a" transform="rotate(200.0 44.9 21.5)"/><ellipse cx="44.9" cy="16.17" rx="1.25" ry="3.61" fill="#fbb822" transform="rotate(220.0 44.9 21.5)"/><ellipse cx="44.9" cy="16.17" rx="1.25" ry="3.61" fill="#f8a11a" transform="rotate(240.0 44.9 21.5)"/><ellipse cx="44.9" cy="16.17" rx="1.25" ry="3.61" fill="#fbb822" transform="rotate(260.0 44.9 21.5)"/><ellipse cx="44.9" cy="16.17" rx="1.25" ry="3.61" fill="#f8a11a" transform="rotate(280.0 44.9 21.5)"/><ellipse cx="44.9" cy="16.17" rx="1.25" ry="3.61" fill="#fbb822" transform="rotate(300.0 44.9 21.5)"/><ellipse cx="44.9" cy="16.17" rx="1.25" ry="3.61" fill="#f8a11a" transform="rotate(320.0 44.9 21.5)"/><ellipse cx="44.9" cy="16.17" rx="1.25" ry="3.61" fill="#fbb822" transform="rotate(340.0 44.9 21.5)"/><ellipse cx="44.9" cy="17.66" rx="1.1" ry="2.60" fill="#fcc324" transform="rotate(0.0 44.9 21.5)"/><ellipse cx="44.9" cy="17.66" rx="1.1" ry="2.60" fill="#f9ad1c" transform="rotate(25.7 44.9 21.5)"/><ellipse cx="44.9" cy="17.66" rx="1.1" ry="2.60" fill="#fcc324" transform="rotate(51.4 44.9 21.5)"/><ellipse cx="44.9" cy="17.66" rx="1.1" ry="2.60" fill="#f9ad1c" transform="rotate(77.1 44.9 21.5)"/><ellipse cx="44.9" cy="17.66" rx="1.1" ry="2.60" fill="#fcc324" transform="rotate(102.9 44.9 21.5)"/><ellipse cx="44.9" cy="17.66" rx="1.1" ry="2.60" fill="#f9ad1c" transform="rotate(128.6 44.9 21.5)"/><ellipse cx="44.9" cy="17.66" rx="1.1" ry="2.60" fill="#fcc324" transform="rotate(154.3 44.9 21.5)"/><ellipse cx="44.9" cy="17.66" rx="1.1" ry="2.60" fill="#f9ad1c" transform="rotate(180.0 44.9 21.5)"/><ellipse cx="44.9" cy="17.66" rx="1.1" ry="2.60" fill="#fcc324" transform="rotate(205.7 44.9 21.5)"/><ellipse cx="44.9" cy="17.66" rx="1.1" ry="2.60" fill="#f9ad1c" transform="rotate(231.4 44.9 21.5)"/><ellipse cx="44.9" cy="17.66" rx="1.1" ry="2.60" fill="#fcc324" transform="rotate(257.1 44.9 21.5)"/><ellipse cx="44.9" cy="17.66" rx="1.1" ry="2.60" fill="#f9ad1c" transform="rotate(282.9 44.9 21.5)"/><ellipse cx="44.9" cy="17.66" rx="1.1" ry="2.60" fill="#fcc324" transform="rotate(308.6 44.9 21.5)"/><ellipse cx="44.9" cy="17.66" rx="1.1" ry="2.60" fill="#f9ad1c" transform="rotate(334.3 44.9 21.5)"/><circle cx="44.9" cy="21.5" r="2.5" fill="#e0701c"/><circle cx="44.6" cy="21.1" r="1.3" fill="#e98522"/></svg>
<svg style="left:564px;top:12.600000000000023px" width="24" height="23" viewBox="0 0 24 23">
<defs><linearGradient id="tv1" x1="0" y1="0" x2="1" y2="1"><stop offset="0" stop-color="#fff"/><stop offset="1" stop-color="#d9dde0"/></linearGradient>
<linearGradient id="tv2" x1="0" y1="0" x2="1" y2="1"><stop offset="0" stop-color="#3a3a3a"/><stop offset="1" stop-color="#111"/></linearGradient></defs>
<rect x="6.4" y="0.2" width="17.4" height="15.6" rx="1.4" fill="url(#tv1)" stroke="#d6dee2" stroke-width="0.5"/>
<rect x="0.4" y="6.6" width="17" height="15.6" rx="1.6" fill="url(#tv2)"/>
<rect x="7" y="6.6" width="10.4" height="8.8" fill="#c4c5c6" opacity="0.9"/>
</svg>
<svg style="left:607.5px;top:12.600000000000023px" width="24" height="23" viewBox="0 0 24 23">
<defs><linearGradient id="ch" x1="0" y1="1" x2="1" y2="0"><stop offset="0" stop-color="#5148c2"/><stop offset="0.5" stop-color="#6a63cf"/><stop offset="1" stop-color="#7fa2f2"/></linearGradient></defs>
<path d="M12.2 0.4A11 11 0 1 1 6.4 20.4L0.8 22.2L2.6 17.2A11 11 0 0 1 12.2 0.4Z" fill="url(#ch)"/>
<rect x="5" y="7" width="9.4" height="8.6" rx="1.6" fill="#fff"/><path d="M15 10.2L18 7.8V14.8L15 12.4Z" fill="#fff"/></svg>
<svg style="left:652px;top:11.399999999999977px" width="24" height="24" viewBox="0 0 24 24">
<defs><radialGradient id="ff1" cx="0.78" cy="0.12" r="1.05"><stop offset="0" stop-color="#fff23a"/><stop offset="0.3" stop-color="#ffbd2a"/><stop offset="0.55" stop-color="#ff7a1c"/><stop offset="0.8" stop-color="#ff3a50"/><stop offset="1" stop-color="#e8158c"/></radialGradient>
<radialGradient id="ff2" cx="0.45" cy="0.7" r="0.8"><stop offset="0" stop-color="#8a5cf6"/><stop offset="1" stop-color="#5a2cc0"/></radialGradient></defs>
<path d="M14.2 0.2C16.8 2 17.8 4 18 6C19.2 5.4 20.6 6.4 21.8 8.8C24.8 15.8 19.6 23.6 12 23.6C4.4 23.6 -0.8 16.6 2 9.4C2.4 8.2 3 7 3.8 6.2C3.8 7 4 7.8 4.4 8.4C4.8 6.4 5.6 5 7 4C7 5 7.4 5.8 8 6.2C10.4 5.6 13 3.4 14.2 0.2Z" fill="url(#ff1)"/>
<circle cx="12.6" cy="11.6" r="4.9" fill="url(#ff2)"/>
<path d="M5.8 9.4C7.8 7.6 11 7.8 12.8 9.6C10.8 9.4 9.8 10.4 10 11.6C10.2 13.2 12.4 14 14.2 13C13.2 16 9.4 16.6 7.2 14.8C5.8 13.4 5.2 11.2 5.8 9.4Z" fill="#ff8a1a"/>
<path d="M3.4 8.6L7.4 7.2L9.4 9L5.6 10Z" fill="#ffa02a"/>
</svg>
<div class="a" style="left:689px;top:5px;width:38px;height:38px;border-radius:4px;background:#e2f0f5;border:1px solid #d6e6ec"></div>
<svg style="left:696px;top:12px" width="24" height="24" viewBox="0 0 24 24">
<circle cx="12" cy="12" r="12" fill="#fff"/>
<path d="M12 12L1.61 6A12 12 0 0 1 22.39 6Z" fill="#ea4335"/>
<path d="M12 12L22.39 6A12 12 0 0 1 12 24Z" fill="#fbbc04"/>
<path d="M12 12L12 24A12 12 0 0 1 1.61 6Z" fill="#34a853"/>
<path d="M12 6.4H22.2A12 12 0 0 0 1.61 6L6.8 14.8Z" fill="#ea4335"/>
<path d="M16.85 14.8L11.7 23.99A12 12 0 0 0 22.39 6H12Z" fill="#fbbc04"/>
<path d="M7.15 14.8L1.61 6A12 12 0 0 0 11.7 23.99L16.85 14.8Z" fill="#34a853"/>
<circle cx="12" cy="12" r="5.6" fill="#fff"/><circle cx="12" cy="12" r="4.5" fill="#4285f4"/></svg>
<div class="a" style="left:700px;top:40px;width:16px;height:2.8px;border-radius:1.4px;background:#1b7f96"></div>
<svg style="left:740px;top:12px" width="24" height="24" viewBox="0 0 24 24">
<defs><linearGradient id="cu1" x1="0" y1="0" x2="1" y2="0"><stop offset="0" stop-color="#ff02f0"/><stop offset="1" stop-color="#ffc800"/></linearGradient>
<linearGradient id="cu2" x1="0" y1="0" x2="1" y2="0"><stop offset="0" stop-color="#8930fd"/><stop offset="1" stop-color="#49ccf9"/></linearGradient></defs>
<rect width="24" height="24" rx="4.5" fill="#fff"/>
<path d="M6.4 10.4L12 5.4L17.6 10.4" fill="none" stroke="url(#cu1)" stroke-width="2.8" stroke-linejoin="miter"/>
<path d="M6.2 15C9.4 19.2 14.6 19.2 17.8 15" fill="none" stroke="url(#cu2)" stroke-width="2.8"/></svg>
<svg style="left:784px;top:12px" width="24" height="24" viewBox="0 0 24 24">
<defs><linearGradient id="sg" x1="0" y1="0" x2="1" y2="1"><stop offset="0" stop-color="#3f86c6"/><stop offset="1" stop-color="#2a68aa"/></linearGradient></defs>
<rect x="0.4" y="0.4" width="23.2" height="23.2" fill="url(#sg)" stroke="#2f6fb5" stroke-width="0.8"/>
<path d="M24 4.2C16 0.8 5.4 2.4 5.4 8.4C5.4 14.2 18.8 11.6 18.8 17C18.8 22.2 8 22 0 18.8" fill="none" stroke="#b9c9d8" stroke-width="5.6"/>
<path d="M24 3.4C16 0 5.4 1.6 5.4 7.6C5.4 13.4 18.8 10.8 18.8 16.2C18.8 21.4 8 21.2 0 18" fill="none" stroke="#fff" stroke-width="5.4"/>
<rect x="0.4" y="0.4" width="23.2" height="23.2" fill="none" stroke="#2f6fb5" stroke-width="0.9"/>
</svg>
<svg style="left:830px;top:12.600000000000023px" width="20" height="23" viewBox="0 0 20 23">
<path d="M1.6 16.6H18.4L19.8 21.4Q20 22.6 18.8 22.6H1.2Q0 22.6 0.2 21.4Z" fill="#f28b0c"/>
<path d="M8.6 0.6H11.4L16.4 18.4Q10 20.4 3.6 18.4Z" fill="#f7941d"/>
<path d="M7.4 5.2H12.6L13.8 9.4H6.2Z" fill="#f4f4f4"/>
<path d="M5.2 13H14.8L15.8 16.8Q10 18.2 4.2 16.8Z" fill="#f4f4f4"/></svg>
<svg style="left:875px;top:11.600000000000023px" width="18" height="25" viewBox="0 0 18 25">
<rect x="0" y="20" width="18" height="4" rx="1.2" fill="#a8521a"/>
<rect x="0.2" y="1.6" width="17.6" height="20.4" rx="1.6" fill="#3ab4e8"/>
<rect x="0.2" y="19.6" width="17.6" height="2.4" fill="#e8f4fa"/>
<g fill="#0b5f94"><rect x="2.6" y="0" width="1.8" height="3.4" rx="0.8"/><rect x="6.2" y="0" width="1.8" height="3.4" rx="0.8"/><rect x="9.8" y="0" width="1.8" height="3.4" rx="0.8"/><rect x="13.4" y="0" width="1.8" height="3.4" rx="0.8"/>
<rect x="3" y="6.4" width="12" height="1.9"/><rect x="3" y="10" width="12" height="1.9"/><rect x="3" y="13.6" width="12" height="1.9"/><rect x="3" y="17.2" width="12" height="1.5"/></g></svg>
<svg style="left:916px;top:12px" width="24" height="24" viewBox="0 0 24 24">
<rect width="24" height="24" fill="#f04238"/>
<polygon points="9.2,7 14,11.8 9.2,16.6 4.4,11.8" fill="#fff"/>
<path d="M14.2 6.8L19.2 11.8L14.2 16.8L12.6 15.2L16 11.8L12.6 8.4Z" fill="#fff"/></svg>
<svg style="left:960px;top:12px" width="24" height="24" viewBox="0 0 24 24">
<defs><linearGradient id="fs0" x1="0" y1="0" x2="0" y2="1"><stop offset="0" stop-color="#f6f6f6"/><stop offset="1" stop-color="#d6d6d6"/></linearGradient>
<linearGradient id="fs1" x1="0" y1="0" x2="1" y2="1"><stop offset="0" stop-color="#f47a1c"/><stop offset="0.6" stop-color="#e02a1e"/><stop offset="1" stop-color="#c81818"/></linearGradient>
<linearGradient id="fs2" x1="1" y1="0" x2="0" y2="1"><stop offset="0" stop-color="#2fb84a"/><stop offset="1" stop-color="#148a2c"/></linearGradient></defs>
<rect x="0.8" y="2" width="22.4" height="20.4" rx="3" fill="url(#fs0)" stroke="#c4c4c4" stroke-width="0.6"/>
<path d="M12.3 0.3C6 3 1.5 9 0.7 15.7C3 13.6 5.6 12.6 8.2 12.8C8 8 9.6 3.6 12.3 0.3Z" fill="url(#fs2)"/>
<path d="M10.5 1.9C16.6 5 20 11 19.8 18.4C17.4 18.6 14.2 19.8 11.9 21.7C11.6 14.4 11.4 8 10.5 1.9Z" fill="url(#fs1)"/>
</svg>
<svg style="left:1004px;top:12px" width="24" height="24" viewBox="0 0 24 24">
<path d="M12.2 0.2A11.7 11.7 0 0 0 2.2 18L0.2 23.8L6.2 22A11.7 11.7 0 1 0 12.2 0.2Z" fill="#fff"/>
<path d="M12.2 2.2A9.7 9.7 0 0 0 4.2 17.4L3 21L6.8 19.8A9.7 9.7 0 1 0 12.2 2.2Z" fill="#2cb742"/>
<path d="M8.6 6.4C9.2 6.2 9.6 6.4 9.8 7L10.6 8.8C10.8 9.2 10.6 9.6 10.2 10L9.6 10.6C10.4 12.4 11.8 13.6 13.6 14.4L14.4 13.6C14.8 13.2 15.2 13.2 15.6 13.4L17.4 14.4C17.8 14.6 17.8 15 17.6 15.6C17 17.2 15.4 17.6 13.6 17C10.6 16 8.2 13.8 7.2 10.6C6.6 8.8 7.2 7 8.6 6.4Z" fill="#fff"/></svg>
<svg style="left:1048px;top:12px" width="24" height="24" viewBox="0 0 24 24">
<rect x="11" y="3" width="12" height="18" fill="#fff" stroke="#1e7145" stroke-width="0.9"/>
<g stroke="#1e7145" stroke-width="0.8"><path d="M11 6.6H23M11 10.2H23M11 13.8H23M11 17.4H23M16.4 3V21M19.8 3V21"/></g>
<path d="M0.4 2.6L14 0.4V23.6L0.4 21.4Z" fill="#1e7145"/>
<path d="M3.6 7.6H5.8L7.2 10.4L8.6 7.6H10.8L8.4 12L10.9 16.4H8.6L7.2 13.5L5.7 16.4H3.5L6 12Z" fill="#fff"/></svg>
<div class="a" style="left:660.6999999999999px;top:40px;width:6.2px;height:2.7px;border-radius:1.35px;background:#858a8d"></div>
<div class="a" style="left:748.9px;top:40px;width:6.2px;height:2.7px;border-radius:1.35px;background:#858a8d"></div>
<div class="a" style="left:792.9px;top:40px;width:6.2px;height:2.7px;border-radius:1.35px;background:#858a8d"></div>
<div class="a" style="left:881.4px;top:40px;width:6.2px;height:2.7px;border-radius:1.35px;background:#858a8d"></div>
<div class="a" style="left:1013.1px;top:40px;width:6.2px;height:2.7px;border-radius:1.35px;background:#858a8d"></div>
<div class="a" style="left:1056.9px;top:40px;width:6.2px;height:2.7px;border-radius:1.35px;background:#858a8d"></div>
<svg style="left:1153.5px;top:20.200000000000045px" width="11" height="7" viewBox="0 0 11 7"><path d="M0.8 6.2L5.5 1.2L10.2 6.2" stroke="#1b1b1b" stroke-width="1.3" fill="none"/></svg>
<svg style="left:1183px;top:17.600000000000023px" width="16" height="12" viewBox="0 0 16 12"><g fill="none" stroke="#1b1b1b" stroke-width="1.1"><path d="M0.6 4.4A10.4 10.4 0 0 1 15.4 4.4"/><path d="M2.8 6.6A7.3 7.3 0 0 1 13.2 6.6"/><path d="M5 8.8A4.2 4.2 0 0 1 11 8.8"/></g><circle cx="8" cy="10.6" r="1.1" fill="#1b1b1b"/></svg>
<svg style="left:1207px;top:18.600000000000023px" width="16" height="11" viewBox="0 0 16 11"><path d="M0.6 3.6H3L6.4 0.7V10.3L3 7.4H0.6Z" fill="none" stroke="#1b1b1b" stroke-width="1" stroke-linejoin="round"/><path d="M9.4 3L14.6 8M14.6 3L9.4 8" stroke="#1b1b1b" stroke-width="1"/></svg>
<svg style="left:1230.5px;top:16.399999999999977px" width="17" height="13" viewBox="0 0 17 13"><rect x="1.6" y="4" width="13" height="8.2" rx="1.6" fill="none" stroke="#1b1b1b" stroke-width="1"/><rect x="3.2" y="5.6" width="9.8" height="5" rx="0.6" fill="#1b1b1b"/><rect x="15" y="6.4" width="1.6" height="3.4" rx="0.6" fill="#1b1b1b"/><path d="M3.8 0.2L0.6 5.4H3L2.2 9L5.6 3.8H3.2Z" fill="#1b1b1b" stroke="#cee6ee" stroke-width="0.7"/></svg>
<span class="t" style="left:318.20000000000005px;width:1000px;text-align:right;top:11.31px;font-size:11.8px;line-height:11.8px;color:#1a1a1a;letter-spacing:-0.22px;">5:21 PM</span>
<span class="t" style="left:318.4000000000001px;width:1000px;text-align:right;top:27.31px;font-size:11.8px;line-height:11.8px;color:#1a1a1a;letter-spacing:0.22px;">10/2/2023</span>
<div class="a" style="left:1330px;top:16px;width:16px;height:16px;border-radius:8px;background:#2a8a9e"></div>
<span class="t" style="left:838px;width:1000px;text-align:center;top:19.77px;font-size:9.6px;line-height:9.6px;color:#fff;font-weight:bold;">4</span>
</div>
</body></html>
